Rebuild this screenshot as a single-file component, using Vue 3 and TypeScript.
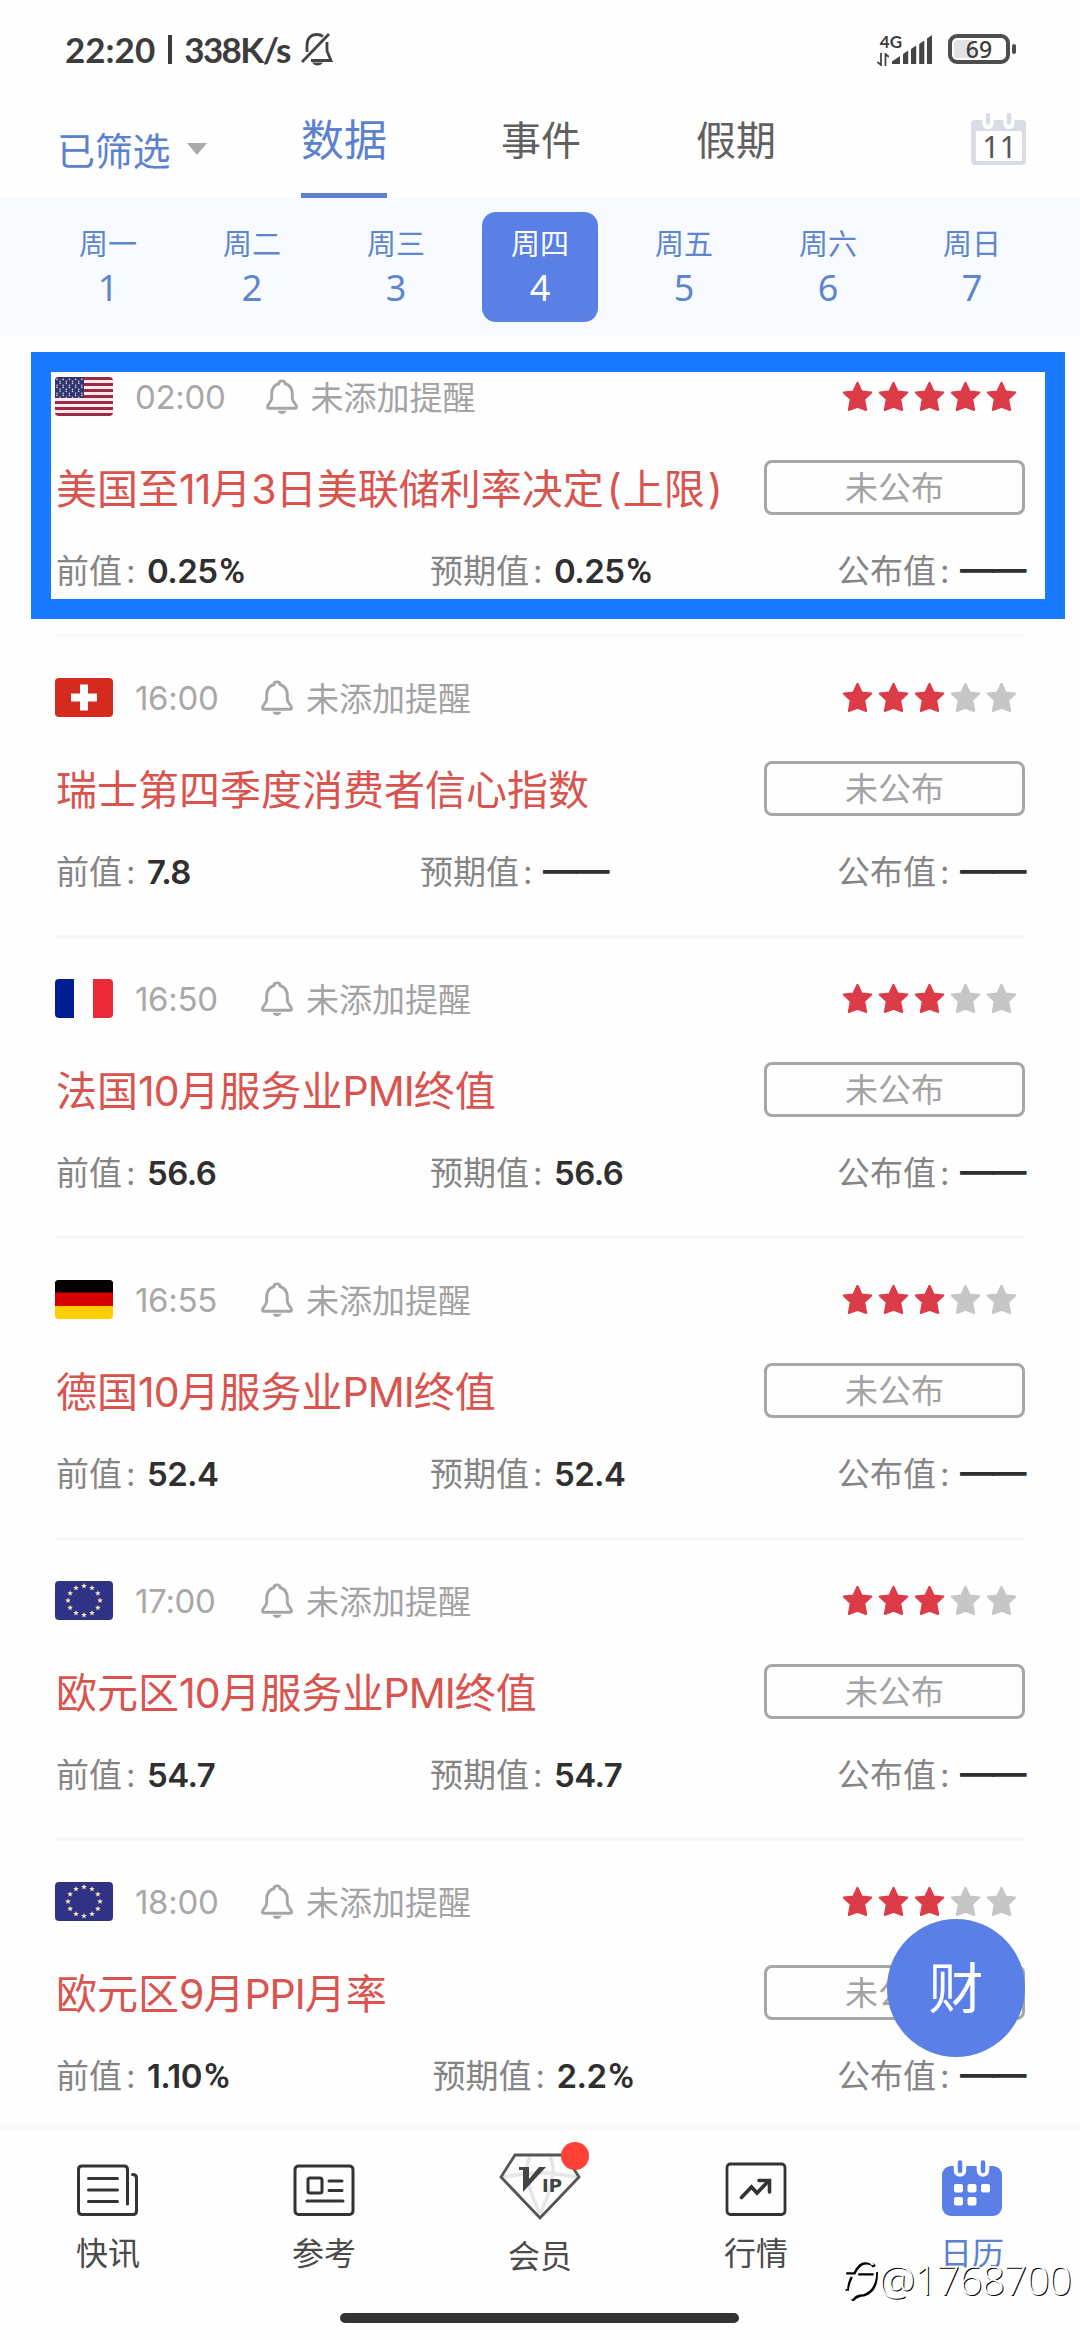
<script setup lang="ts">
interface Day {
  week: string
  date: number
}

interface CalendarEvent {
  flag: 'us' | 'ch' | 'fr' | 'de' | 'eu'
  time: string
  stars: number
  title: string
  previous: string
  forecast: string
}

interface Run {
  text: string
  kind: 'cjk' | 'latin' | 'paren'
}

const days: Day[] = [
  { week: '周一', date: 1 },
  { week: '周二', date: 2 },
  { week: '周三', date: 3 },
  { week: '周四', date: 4 },
  { week: '周五', date: 5 },
  { week: '周六', date: 6 },
  { week: '周日', date: 7 },
]
const activeDate = 4

const events: CalendarEvent[] = [
  { flag: 'us', time: '02:00', stars: 5, title: '美国至11月3日美联储利率决定(上限)', previous: '0.25%', forecast: '0.25%' },
  { flag: 'ch', time: '16:00', stars: 3, title: '瑞士第四季度消费者信心指数', previous: '7.8', forecast: '——' },
  { flag: 'fr', time: '16:50', stars: 3, title: '法国10月服务业PMI终值', previous: '56.6', forecast: '56.6' },
  { flag: 'de', time: '16:55', stars: 3, title: '德国10月服务业PMI终值', previous: '52.4', forecast: '52.4' },
  { flag: 'eu', time: '17:00', stars: 3, title: '欧元区10月服务业PMI终值', previous: '54.7', forecast: '54.7' },
  { flag: 'eu', time: '18:00', stars: 3, title: '欧元区9月PPI月率', previous: '1.10%', forecast: '2.2%' },
]

// Splits a title so that Latin runs and brackets can carry their own tracking.
function runs(title: string): Run[] {
  return (title.match(/[A-Za-z0-9]+|[()]|[^A-Za-z0-9()]+/g) ?? []).map((text) => ({
    text,
    kind: /^[()]/.test(text) ? 'paren' : /^[A-Za-z0-9]/.test(text) ? 'latin' : 'cjk',
  }))
}

function pairs(ev: CalendarEvent) {
  return [
    { label: '前值', value: ev.previous },
    { label: '预期值', value: ev.forecast },
    { label: '公布值', value: '——' },
  ].map((p) => ({
    label: p.label,
    empty: p.value === '——',
    number: p.value.replace('%', ''),
    unit: p.value.endsWith('%') ? '%' : '',
  }))
}

const euStars = Array.from({ length: 12 }, (_, i) => {
  const a = (i * Math.PI) / 6
  return { x: 29 + 16 * Math.sin(a), y: 19.5 - 14.5 * Math.cos(a) }
})

function starPoints(cx: number, cy: number, r: number): string {
  return Array.from({ length: 10 }, (_, i) => {
    const a = (i * Math.PI) / 5
    const d = i % 2 ? r * 0.42 : r
    return `${(cx + d * Math.sin(a)).toFixed(2)},${(cy - d * Math.cos(a)).toFixed(2)}`
  }).join(' ')
}

const cantonDots = Array.from({ length: 45 }, (_, i) => ({
  x: 2 + (i % 9) * 3.1,
  y: 2.4 + Math.floor(i / 9) * 4 + (i % 2 ? 1.8 : 0),
}))
</script>

<template>
  <div class="screen">
    <header class="status">
      <span class="clock">22:20</span>
      <span class="sep"></span>
      <span class="speed">338K/s</span>
      <svg class="mute" width="32" height="34" viewBox="0 0 32 34" fill="none" stroke="#444" stroke-width="2.8">
        <path d="M6 20V13C6 6.500 10 2.500 16 2.500C18.500 2.500 20.500 3.300 22 4.500" />
        <path d="M26 10V19L30 28.500H10" />
        <path d="M1 30L28 2" />
        <path d="M11 30.500H22Q20 33.500 16.500 33.500T11 30.500Z" fill="#444" stroke="none" />
      </svg>
      <div class="net">
        <span class="gen">4G</span>
        <svg width="12" height="13" viewBox="0 0 12 13" fill="none" stroke="#444" stroke-width="1.800">
          <path d="M4 0V12L0.500 9M8.500 13V1L12 4" />
        </svg>
      </div>
      <svg class="signal" width="40" height="29" viewBox="0 0 40 29" fill="#444">
        <path d="M0 29V26.500L8 21V29ZM11 29V19L16.200 15.500V29ZM19 29V14L24.200 10.500V29ZM27.200 29V9L32.300 5.500V29ZM35 29V3.500L40 0V29Z" />
      </svg>
      <div class="battery"><span>69</span></div>
      <i class="battery-tip"></i>
    </header>

    <nav class="tabs">
      <div class="filter">已筛选<i class="caret"></i></div>
      <div class="tab active">数据</div>
      <div class="tab">事件</div>
      <div class="tab">假期</div>
      <div class="today">
        <svg width="55" height="52" viewBox="0 0 55 52">
          <rect x="0" y="7" width="55" height="45" rx="4" fill="#d9dce5" />
          <rect x="5" y="18" width="46" height="30" rx="1" fill="#fefefe" />
          <path d="M17 0V10.500M38 0V10.500" stroke="#fefefe" stroke-width="11" stroke-linecap="round" />
          <path d="M17 2V9.500M38 2V9.500" stroke="#d9dce5" stroke-width="4.500" stroke-linecap="round" />
        </svg>
        <span>11</span>
      </div>
    </nav>

    <section class="week">
      <div v-for="day in days" :key="day.date" class="day" :class="{ selected: day.date === activeDate }">
        <span class="day-name">{{ day.week }}</span>
        <span class="day-num">{{ day.date }}</span>
      </div>
    </section>

    <main class="list">
      <article v-for="(ev, i) in events" :key="i" class="event">
        <div class="head">
          <svg class="flag" width="58" height="39" viewBox="0 0 58 39">
            <g v-if="ev.flag === 'us'">
              <rect width="58" height="39" fill="#fbe9ee" />
              <rect v-for="n in 7" :key="n" y="0" width="58" height="3" :transform="`translate(0 ${(n - 1) * 6})`" fill="#9c2a42" />
              <rect width="29" height="21" fill="#33356f" />
              <circle v-for="(d, k) in cantonDots" :key="'d' + k" :cx="d.x" :cy="d.y" r="0.800" fill="#d5d8ec" />
            </g>
            <g v-else-if="ev.flag === 'ch'">
              <rect width="58" height="39" fill="#d52b1e" />
              <path d="M25 6.500h8v9h9v8h-9v9h-8v-9h-9v-8h9z" fill="#fff" />
            </g>
            <g v-else-if="ev.flag === 'fr'">
              <rect width="58" height="39" fill="#fefefe" />
              <rect width="19" height="39" fill="#001f93" />
              <rect x="38" width="20" height="39" fill="#eb2a39" />
            </g>
            <g v-else-if="ev.flag === 'de'">
              <rect width="58" height="39" fill="#ffce00" />
              <rect width="58" height="26" fill="#d80000" />
              <rect width="58" height="12.500" fill="#000" />
            </g>
            <g v-else>
              <rect width="58" height="39" fill="#2f3285" />
              <polygon v-for="(s, k) in euStars" :key="'s' + k" :points="starPoints(s.x, s.y, 3)" fill="#f3ecb0" />
            </g>
          </svg>
          <span class="time">{{ ev.time }}</span>
          <svg class="bell" width="32" height="35" viewBox="0 0 32 35" fill="none" stroke="#a6a6a6" stroke-width="2.900" stroke-linejoin="round">
            <path d="M13 4.500C13 1 19 1 19 4.500C24 6 26.300 10 26.300 15V19.500C26.300 22.500 30.500 25.500 30.500 27.500C30.500 28.800 30 29.300 29 29.300H3C2 29.300 1.500 28.800 1.500 27.500C1.500 25.500 5.700 22.500 5.700 19.500V15C5.700 10 8 6 13 4.500Z" />
            <path d="M11.500 31.800H20.500Q19 35 16 35T11.500 31.800Z" fill="#a6a6a6" stroke="none" />
          </svg>
          <span class="remind">未添加提醒</span>
          <div class="stars">
            <svg v-for="n in 5" :key="n" width="31" height="31" viewBox="0 0 31 31" :class="n <= ev.stars ? 'on' : 'off'">
              <path d="M15.500 1.800L19.600 10.400L29.300 11.600L22.200 18.200L24.200 29L15.500 25.800L6.800 29L8.800 18.200L1.700 11.600L11.400 10.400Z" stroke-width="2" stroke-linejoin="round" />
            </svg>
          </div>
        </div>
        <div class="middle">
          <h3 class="title"><span v-for="(run, k) in runs(ev.title)" :key="k" :class="run.kind">{{ run.text }}</span></h3>
          <div class="state">未公布</div>
        </div>
        <div class="values">
          <div v-for="pair in pairs(ev)" :key="pair.label" class="pair">
            <span class="label">{{ pair.label }}</span>
            <b :class="{ empty: pair.empty }">{{ pair.number }}<span v-if="pair.unit" class="unit">{{ pair.unit }}</span></b>
          </div>
        </div>
      </article>
      <div class="highlight"></div>
      <div class="fab">财</div>
    </main>

    <footer class="bottom">
      <div class="item">
        <svg width="62" height="52" viewBox="0 0 62 52" fill="none" stroke="#333" stroke-width="3" stroke-linecap="round">
          <path d="M50.500 40V5.500Q50.500 2 47 2H5Q1.500 2 1.500 5.500V47Q1.500 50.500 5 50.500H56Q59.500 50.500 59.500 47V14Q59.500 10.500 55.500 10.500" />
          <path d="M11.500 14.500H40.500M11.500 26H40.500M11.500 37.500H40.500" />
        </svg>
        <span>快讯</span>
      </div>
      <div class="item">
        <svg width="62" height="52" viewBox="0 0 62 52" fill="none" stroke="#333" stroke-width="3" stroke-linecap="round">
          <rect x="2" y="2" width="58" height="48.500" rx="3.500" />
          <rect x="15" y="14" width="14" height="15" rx="2" />
          <path d="M36 17H49M36 26.500H49M14 37H50" />
        </svg>
        <span>参考</span>
      </div>
      <div class="item vip">
        <svg width="82" height="68" viewBox="0 0 82 68" fill="none">
          <path d="M16 2H66L80 24L41 65L2 24Z" fill="#fdfdfd" />
          <path d="M31 4Q24 16 33 42L41 62M51 4Q58 16 49 42L41 62M4 24L31 20H51L78 24" stroke="#e6e6e8" stroke-width="3.500" />
          <path d="M16 2H66L80 24L41 65L2 24Z" stroke="#555" stroke-width="2.800" />
          <path d="M20 14H30V26L40 14H47L24 39V17H20Z" fill="#444" />
          <text x="43" y="38.500" font-family="DejaVu Sans" font-weight="700" font-size="18" fill="#444">IP</text>
        </svg>
        <i class="dot"></i>
        <span>会员</span>
      </div>
      <div class="item">
        <svg width="62" height="54" viewBox="0 0 62 54" fill="none" stroke="#333" stroke-width="2.800">
          <rect x="2" y="2" width="58" height="50.500" rx="3.500" />
          <path d="M16.500 35.500L26.500 25L32 31L43 19.500" stroke-width="3.600" stroke-linecap="round" />
          <path d="M34 18.500H44.500V30" stroke-width="3.600" stroke-linecap="round" />
        </svg>
        <span>行情</span>
      </div>
      <div class="item current">
        <svg width="62" height="56" viewBox="0 0 62 56">
          <rect x="1" y="6" width="60" height="50" rx="9" fill="#5a80e8" />
          <path d="M19 4V10.500M42 4V10.500" stroke="#fefefe" stroke-width="12.500" stroke-linecap="round" />
          <path d="M19 2.500V11M42 2.500V11" stroke="#5a80e8" stroke-width="4.500" stroke-linecap="round" />
          <g fill="#fff">
            <rect x="13" y="24" width="9" height="8.500" rx="2" />
            <rect x="26.500" y="24" width="9" height="8.500" rx="2" />
            <rect x="40" y="24" width="9" height="8.500" rx="2" />
            <rect x="13" y="37" width="9" height="8.500" rx="2" />
            <rect x="26.500" y="37" width="9" height="8.500" rx="2" />
          </g>
        </svg>
        <span>日历</span>
      </div>
      <i class="home"></i>
      <div class="mark">
        <svg width="36" height="44" viewBox="0 0 36 44" fill="none" stroke-width="3.500">
          <g stroke="#000" transform="translate(1.200 1.700)">
            <path d="M2 14H10Q15 4 22 4Q28 4 30 8M7 18Q3 26 3 32M14 15H32Q32 32 20 36Q12 36 8 42" />
          </g>
          <path d="M2 14H10Q15 4 22 4Q28 4 30 8M7 18Q3 26 3 32M14 15H32Q32 32 20 36Q12 36 8 42" stroke="#fff" stroke-width="2.400" />
        </svg>
        <span>@1768700</span>
      </div>
    </footer>
  </div>
</template>

<style>
body {
  margin: 0;
  background: #fefefe;
}
</style>

<style scoped>
.screen {
  width: 1080px;
  height: 2340px;
  overflow: hidden;
  display: flex;
  flex-direction: column;
  background: #fefefe;
  font-family: Inter, "Noto Sans CJK SC", sans-serif;
  color: #333;
}

.status {
  height: 98px;
  box-sizing: border-box;
  padding: 0 64px 0 65px;
  display: flex;
  align-items: center;
  color: #3c3c3c;
  font-family: Lato, sans-serif;
  font-size: 35px;
  font-weight: 700;
}
.sep {
  flex: none;
  width: 4px;
  height: 29px;
  margin: 0 12px 0 13px;
  background: #3c3c3c;
}
.speed {
  letter-spacing: -1.6px;
}
.mute {
  margin-left: 11px;
}
.net {
  margin-left: auto;
  display: flex;
  flex-direction: column;
  gap: 3px;
}
.gen {
  font-size: 17px;
  line-height: 17px;
  padding-left: 3px;
}
.signal {
  margin-left: -10px;
}
.battery {
  width: 62px;
  height: 30px;
  box-sizing: border-box;
  margin-left: 16px;
  border: 4px solid #4d4d4d;
  border-radius: 9px;
  background: linear-gradient(90deg, #e2e2e2 22px, #fefefe 22px);
  box-shadow: inset 0 0 0 2px #fefefe;
  display: flex;
  align-items: center;
  justify-content: center;
  font-family: "Noto Sans", sans-serif;
  font-size: 23px;
  font-weight: 500;
}
.battery-tip {
  width: 4px;
  height: 10px;
  margin-left: 2px;
  border-radius: 2px;
  background: #4d4d4d;
}

.tabs {
  height: 100px;
  display: flex;
  align-items: flex-start;
}
.filter {
  width: 244px;
  padding: 25px 0 0 57px;
  display: flex;
  align-items: center;
  font-size: 38px;
  line-height: 56px;
  letter-spacing: -0.3px;
  color: #5b82cf;
}
.caret {
  margin: 0 0 4px 17px;
  border: 10px solid transparent;
  border-top: 12px solid #aaa;
  border-bottom: 0;
}
.tab {
  width: 80px;
  height: 100px;
  box-sizing: border-box;
  margin-right: 115px;
  font-size: 40px;
  line-height: 85px;
  color: #606060;
  white-space: nowrap;
}
.tab.active {
  width: 86px;
  margin-right: 114px;
  font-size: 43px;
  color: #5b82cf;
  border-bottom: 5px solid #6080c9;
}
.today {
  position: relative;
  margin: 15px 0 0 80px;
}
.today svg {
  display: block;
}
.today span {
  position: absolute;
  left: 0;
  top: 17px;
  width: 57px;
  text-align: center;
  font-family: "Noto Sans", sans-serif;
  font-size: 30px;
  line-height: 34px;
  color: #555;
}

.week {
  height: 138px;
  box-sizing: border-box;
  padding: 14px 36px;
  display: flex;
  background: #f7faff;
  color: #5f86cc;
}
.day {
  width: 116px;
  height: 110px;
  margin: 0 14px;
  border-radius: 14px;
  display: flex;
  flex-direction: column;
  align-items: center;
}
.day-name {
  margin-top: 13px;
  font-size: 29px;
  line-height: 40px;
}
.day-num {
  margin-top: 3px;
  font-size: 36px;
  line-height: 40px;
  font-family: "Noto Sans", sans-serif;
}
.selected {
  background: #5a80e6;
  color: #fff;
}

.list {
  position: relative;
  height: 1788px;
  overflow: hidden;
}
.event {
  height: 301px;
  box-sizing: border-box;
  margin: 0 55px;
  padding-top: 41px;
  border-bottom: 3px solid #f7f7f7;
}
.head {
  height: 39px;
  display: flex;
  align-items: center;
}
.flag {
  border-radius: 4px;
}
.time {
  min-width: 86px;
  margin-left: 22px;
  font-size: 33px;
  letter-spacing: -0.3px;
  color: #a8a8a8;
}
.bell {
  margin-left: 40px;
}
.remind {
  margin: -2px 0 0 13px;
  font-size: 33px;
  color: #a3a3a3;
}
.stars {
  margin: 0 8px 0 auto;
  display: flex;
  gap: 5px;
}
.on {
  fill: #dc3b48;
  stroke: #dc3b48;
}
.off {
  fill: #c6c6c6;
  stroke: #c6c6c6;
}
.middle {
  margin-top: 44px;
  height: 55px;
  display: flex;
  align-items: center;
  justify-content: space-between;
}
.title {
  margin: 3px 0 0 1px;
  font-size: 41px;
  font-weight: 400;
  line-height: 55px;
  color: #d9544f;
  white-space: nowrap;
}
.latin {
  letter-spacing: -1px;
}
.paren {
  padding: 0 1px 0 3px;
}
.state {
  width: 261px;
  height: 55px;
  box-sizing: border-box;
  border: 3px solid #a6a6a6;
  border-radius: 8px;
  font-size: 33px;
  line-height: 50px;
  text-align: center;
  color: #a3a3a3;
}
.values {
  margin-top: 39px;
  height: 34px;
  padding-left: 1px;
  display: flex;
  align-items: center;
  justify-content: space-between;
  font-size: 33px;
  line-height: 34px;
}
.pair {
  display: flex;
  align-items: center;
}
.label {
  color: #858585;
}
.label::after {
  content: ":";
  display: inline-block;
  width: 25px;
  text-indent: 4px;
}
.pair b {
  color: #2f2f2f;
  font-weight: 600;
  letter-spacing: -0.6px;
}
.pair .empty {
  margin: -4px 1px 0 -1px;
  font-size: 34.500px;
  letter-spacing: -2.500px;
}
.unit {
  margin-left: 2px;
  font-family: Roboto, sans-serif;
  font-size: 35px;
}
.highlight {
  position: absolute;
  left: 31px;
  top: 16px;
  width: 1034px;
  height: 267px;
  box-sizing: border-box;
  border: 20px solid #1a7aff;
}
.fab {
  position: absolute;
  right: 55px;
  top: 1583px;
  width: 138px;
  height: 138px;
  border-radius: 50%;
  background: #5a80e8;
  color: #fff;
  font-size: 55px;
  line-height: 138px;
  text-align: center;
}

.bottom {
  position: relative;
  height: 216px;
  box-sizing: border-box;
  padding: 0;
  display: flex;
  border-top: 6px solid #fafafa;
}
.item {
  position: relative;
  width: 216px;
  height: 150px;
  display: flex;
  flex-direction: column;
  align-items: center;
  justify-content: flex-end;
  font-size: 32px;
  line-height: 39px;
  color: #4a4a4a;
}
.item span {
  margin-top: 18px;
  height: 46px;
}
.vip span {
  margin-top: 16px;
  height: 43px;
}
.current {
  color: #5b82cf;
}
.dot {
  position: absolute;
  left: 129px;
  top: 12px;
  width: 28px;
  height: 28px;
  border-radius: 50%;
  background: #ff4136;
}
.home {
  position: absolute;
  left: 340px;
  top: 183px;
  width: 399px;
  height: 10px;
  border-radius: 5px;
  background: #333;
}
.mark {
  position: absolute;
  right: 9px;
  top: 121px;
  display: flex;
  align-items: center;
  font-family: "Open Sans", sans-serif;
  font-size: 41px;
  font-weight: 300;
  letter-spacing: -1px;
  color: #fff;
  text-shadow: 1px 1px 0 #000;
}
</style>
